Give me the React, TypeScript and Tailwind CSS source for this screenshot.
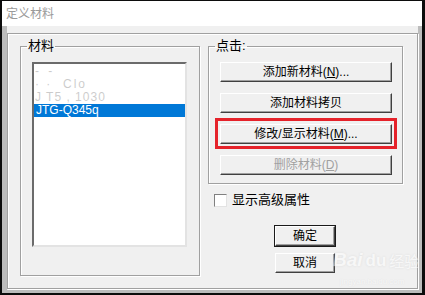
import React from "react";

const font = "font-['Liberation_Sans','Noto_Sans_CJK_SC',sans-serif]";

function Btn({ children, disabled, def }: { children: React.ReactNode; disabled?: boolean; def?: boolean }) {
  return (
    <div
      className={
        "h-[20px] flex items-center justify-center text-[12px] leading-none bg-[#f0f0f0] border border-t-white border-l-white border-r-[#404040] border-b-[#404040] shadow-[inset_-1px_-1px_0_#a0a0a0] " +
        (disabled ? "text-[#a0a0a0] " : "text-black ") +
        (def ? "outline outline-1 outline-[#1a1a1a]" : "")
      }
    >
      {children}
    </div>
  );
}

export default function App() {
  return (
    <div className={"relative w-[425px] h-[295px] bg-[#0c0c0c] pt-px pl-[2px] pr-[3px] pb-[2px] " + font}>
      <div className="h-full flex flex-col bg-[#bcbcbc]">
        <div className="h-[25px] shrink-0 bg-white flex items-center pl-[4px] text-[12px] text-[#9a9a9a]">定义材料</div>
        <div className="flex-1 flex pl-[5px] pr-[4px] pb-[3px]">
          <div className="flex-1 bg-[#f0f0f0] pt-[7px] pb-px">
            <div className="h-full border border-[#a0a0a0] shadow-[inset_1px_1px_0_#fff,1px_1px_0_#fff] flex items-start pl-[12px] pt-[4px] gap-[8px]">
              {/* materials group */}
              <fieldset className="w-[180px] h-[238px] border border-[#a0a0a0] shadow-[inset_1px_1px_0_#fff,1px_1px_0_#fff] pl-[11px] pt-[8px]">
                <legend className="-ml-[5px] px-[1px] text-[13px] leading-[16px] text-black">材料</legend>
                <div className="w-[155px] h-[185px] bg-white border-2 border-t-[#6b6b6b] border-l-[#6b6b6b] border-r-[#e3e3e3] border-b-[#e3e3e3] text-[12px] leading-[13px] pt-[1px]">
                  <div className="h-[13px] pl-[1px] text-black opacity-20 tracking-[3px]">- -</div>
                  <div className="h-[13px] pl-[1px] text-black opacity-20 tracking-[2px]">· ·&nbsp; Clo</div>
                  <div className="h-[13px] pl-[1px] text-black opacity-20 tracking-[1px]">J T5 , 1030</div>
                  <div className="h-[13px] pl-[2px] bg-[#0078d7] text-white">JTG-Q345q</div>
                </div>
              </fieldset>

              {/* actions column */}
              <div className="w-[195px] flex flex-col">
                <fieldset className="h-[146px] border border-[#a0a0a0] shadow-[inset_1px_1px_0_#fff,1px_1px_0_#fff] pl-[11px] pt-[8px]">
                  <legend className="-ml-[5px] px-[1px] text-[13px] leading-[16px] text-black">点击:</legend>
                  <div className="w-[172px] flex flex-col gap-[11px]">
                    <Btn>
                      添加新材料(<span className="underline">N</span>)...
                    </Btn>
                    <Btn>添加材料拷贝</Btn>
                    <div className="relative">
                      <Btn>
                        修改/显示材料(<span className="underline">M</span>)...
                      </Btn>
                      <div className="absolute -left-[5px] -right-[5px] -top-[6px] -bottom-[5px] border-[3px] border-[#e5222a]" />
                    </div>
                    <Btn disabled>
                      删除材料(<span className="underline">D</span>)
                    </Btn>
                  </div>
                </fieldset>

                <div className="flex items-center mt-[9px] ml-[6px] h-[14px]">
                  <div className="w-[13px] h-[13px] bg-white border border-t-[#808080] border-l-[#808080] border-r-[#e3e3e3] border-b-[#e3e3e3]" />
                  <span className="ml-[5px] text-[13px] text-black">显示高级属性</span>
                </div>

                <div className="self-center flex flex-col gap-[7px] mt-[19px] w-[60px] mr-[1px]">
                  <Btn def>确定</Btn>
                  <Btn>取消</Btn>
                </div>
              </div>
            </div>
          </div>
        </div>
      </div>

      {/* watermark */}
      <div className="absolute left-[333px] top-[250px] flex items-end gap-[3px] text-white opacity-50 [text-shadow:0_0_2px_#c8c8c8] pointer-events-none">
        <span className="text-[19px] font-bold italic leading-none">Bai</span>
        <span className="text-[17px] font-bold leading-none">du</span>
        <span className="text-[15px] leading-none">经验</span>
      </div>
      <div className="absolute left-[340px] top-[276px] text-[8px] text-white opacity-50 [text-shadow:0_0_1px_#ccc]">jingyan.baidu.com</div>
    </div>
  );
}
